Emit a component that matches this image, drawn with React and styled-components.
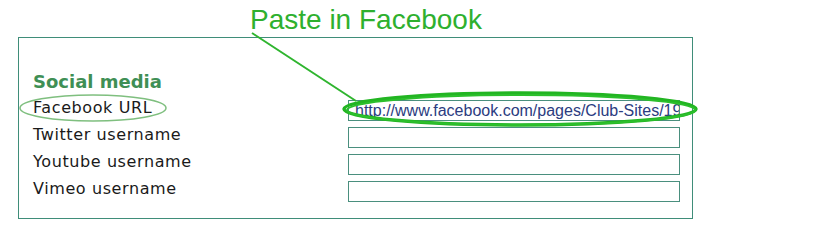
import React from 'react'
import styled, { createGlobalStyle } from 'styled-components'

const GlobalStyle = createGlobalStyle`
  body {
    margin: 0;
    background: #fff;
  }
`

const fields = [
  { label: 'Facebook URL', value: 'http://www.facebook.com/pages/Club-Sites/195836347101' },
  { label: 'Twitter username', value: '' },
  { label: 'Youtube username', value: '' },
  { label: 'Vimeo username', value: '' },
]

const App = () => {
  return (
    <Page>
      <GlobalStyle />
      <Callout>Paste in Facebook</Callout>
      <Panel>
        <Heading>Social media</Heading>
        <Form>
          {fields.map((f) => (
            <React.Fragment key={f.label}>
              <Label>{f.label}</Label>
              <Field type="text" readOnly defaultValue={f.value} />
            </React.Fragment>
          ))}
        </Form>
      </Panel>
      <Markup viewBox="0 0 813 227" width="813" height="227">
        <line x1="252" y1="33" x2="356" y2="101" stroke="#2fb52f" strokeWidth="2" />
        <ellipse cx="93" cy="108" rx="73" ry="13" fill="none" stroke="#7fbf7f" strokeWidth="1.5" />
        <ellipse cx="520" cy="109" rx="176" ry="16" fill="none" stroke="#22b522" strokeWidth="3.5" />
        <ellipse cx="521" cy="110" rx="174" ry="15" fill="none" stroke="#2cbf2c" strokeWidth="2" />
      </Markup>
    </Page>
  )
}

const Page = styled.div`
  position: relative;
  width: 813px;
  height: 227px;
  padding-left: 18px;
  box-sizing: border-box;
  overflow: hidden;
`
const Callout = styled.div`
  margin-left: 232px;
  padding-top: 4px;
  font-family: "Liberation Sans", Arial, sans-serif;
  font-size: 28px;
  line-height: 32px;
  color: #2eb02e;
`
const Panel = styled.div`
  margin-top: 1px;
  width: 675px;
  height: 182px;
  box-sizing: border-box;
  border: 1px solid #3f8d79;
  padding: 33px 0 0 14px;
`
const Heading = styled.div`
  font-family: "DejaVu Sans", Verdana, sans-serif;
  font-weight: bold;
  font-size: 18px;
  line-height: 21px;
  color: #3f8f55;
  margin-bottom: 8px;
`
const Form = styled.div`
  display: grid;
  grid-template-columns: 315px 332px;
  grid-auto-rows: 21px;
  row-gap: 6px;
`
const Label = styled.label`
  font-family: "DejaVu Sans", Verdana, sans-serif;
  font-size: 16px;
  line-height: 16px;
  letter-spacing: 0.6px;
  color: #1a1a1a;
  align-self: start;
`
const Field = styled.input`
  box-sizing: border-box;
  width: 332px;
  height: 21px;
  margin: 0;
  border: 1px solid #4a8f7e;
  padding: 0 0 0 6px;
  background: #fff;
  font-family: "Liberation Sans", Arial, sans-serif;
  font-size: 16px;
  color: #2b3c80;
  outline: none;
`
const Markup = styled.svg`
  position: absolute;
  left: 0;
  top: 0;
  pointer-events: none;
`

export default App
